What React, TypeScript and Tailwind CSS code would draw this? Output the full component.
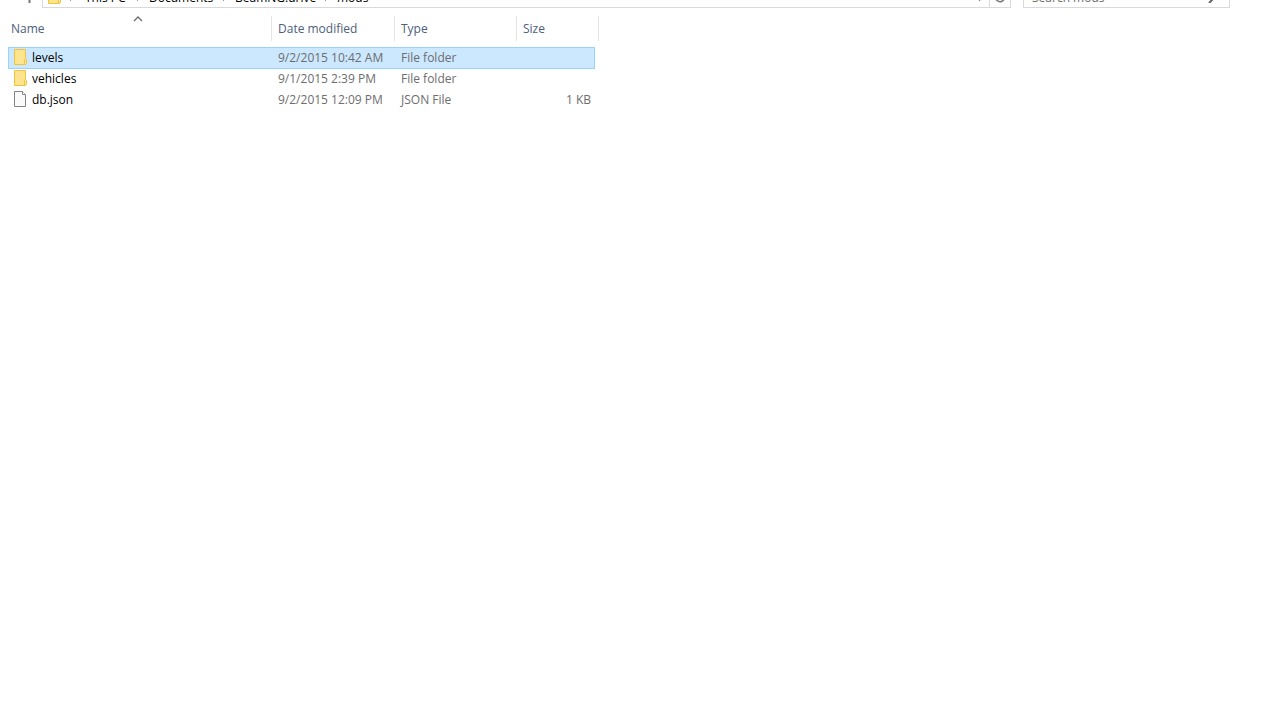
import React from "react";

type Entry = {
  name: string;
  modified: string;
  type: string;
  size: string;
  kind: "folder" | "file";
  selected?: boolean;
};

const entries: Entry[] = [
  { name: "levels", modified: "9/2/2015 10:42 AM", type: "File folder", size: "", kind: "folder", selected: true },
  { name: "vehicles", modified: "9/1/2015 2:39 PM", type: "File folder", size: "", kind: "folder" },
  { name: "db.json", modified: "9/2/2015 12:09 PM", type: "JSON File", size: "1 KB", kind: "file" },
];

const crumbs = [
  { label: "This PC", width: "w-[64px]" },
  { label: "Documents", width: "w-[86px]" },
  { label: "BeamNG.drive", width: "w-[102px]" },
  { label: "mods", width: "w-[40px]" },
];

function FolderIcon() {
  return (
    <svg width="14" height="16" viewBox="0 0 14 16" className="shrink-0" aria-hidden="true">
      <path d="M0.5 0.5H11.5V15.5H0.5Z" fill="#ffe48f" stroke="#f0c33c" />
      <path d="M10.5 15.5V10.5L11.5 9.5L12.5 10.5V14.5L11.5 15.5Z" fill="#ffe9a2" stroke="#f0c33c" />
    </svg>
  );
}

function FileIcon() {
  return (
    <svg width="14" height="16" viewBox="0 0 14 16" className="shrink-0" aria-hidden="true">
      <path d="M0.5 0.5H8.5L11.5 3.5V15.5H0.5Z" fill="#fafafa" stroke="#848484" />
      <path d="M8.5 0.5V3.5H11.5" fill="#ffffff" stroke="#848484" />
    </svg>
  );
}

function Chevron() {
  return (
    <svg width="5" height="8" viewBox="0 0 5 8" className="shrink-0" aria-hidden="true">
      <path d="M1 1L4 4L1 7" fill="none" stroke="#999999" />
    </svg>
  );
}

function NavigationBar() {
  return (
    <header className="flex h-2 items-end overflow-hidden pr-[50px]">
      <button type="button" aria-label="Up" className="flex h-6 w-[42px] shrink-0 items-center pl-6">
        <svg width="11" height="13" viewBox="0 0 11 13" aria-hidden="true">
          <path d="M5.5 13V1M1 5.5L5.5 1L10 5.5" fill="none" stroke="#777777" strokeWidth="2" />
        </svg>
      </button>
      <nav aria-label="Address" className="flex h-6 min-w-0 flex-1 items-center border border-[#d9d9d9] pl-[5px]">
        <FolderIcon />
        <span className="ml-[7px] flex w-4 items-center pt-1">
          <Chevron />
        </span>
        {crumbs.map((crumb, i) => (
          <span key={crumb.label} className={`flex shrink-0 items-center justify-between pr-3 pt-1 ${crumb.width}`}>
            <a href="#" className="whitespace-nowrap text-black">
              {crumb.label}
            </a>
            {i < crumbs.length - 1 && (
              <span className="-mr-1 flex">
                <Chevron />
              </span>
            )}
          </span>
        ))}
        <button type="button" aria-label="Previous locations" className="ml-auto flex h-full w-5 items-center justify-center">
          <svg width="9" height="14" viewBox="0 0 9 14" aria-hidden="true">
            <path d="M1 7L4.5 11L8 7" fill="none" stroke="#777777" strokeWidth="1.5" />
          </svg>
        </button>
        <button type="button" aria-label="Refresh" className="flex h-full w-[21px] items-center justify-center border-l border-[#d9d9d9]">
          <svg width="12" height="14" viewBox="0 0 12 14" aria-hidden="true">
            <path d="M10 6A4.5 4.5 0 1 0 10.5 9M10.5 1V5H7" fill="none" stroke="#777777" strokeWidth="1.5" />
          </svg>
        </button>
      </nav>
      <div className="ml-3 flex h-6 w-[207px] shrink-0 items-center border border-[#d9d9d9] pl-2 pr-[9px]">
        <input
          type="text"
          aria-label="Search mods"
          placeholder="Search mods"
          className="min-w-0 flex-1 bg-transparent pt-1 outline-none placeholder:text-[#6d6d6d]"
        />
        <svg width="12" height="14" viewBox="0 0 12 14" aria-hidden="true">
          <circle cx="7.5" cy="4.5" r="3.5" fill="none" stroke="#666666" strokeWidth="1.5" />
          <path d="M6 9L1 14" fill="none" stroke="#666666" strokeWidth="2" />
        </svg>
      </div>
    </header>
  );
}

function HeaderCell({ label, first, span }: { label: string; first?: boolean; span?: number }) {
  return (
    <th scope="col" colSpan={span} aria-sort={first ? "ascending" : undefined} className="p-0 pb-[6px] text-left font-normal">
      <button
        type="button"
        className={`relative flex h-[25px] w-full items-center border-r border-[#e5e5e5] text-[#4c607a] ${first ? "pl-[3px]" : "pl-[6px]"}`}
      >
        {label}
        {first && (
          <svg width="10" height="6" viewBox="0 0 10 6" className="absolute left-[125px] top-0" aria-hidden="true">
            <path d="M1 5L5 1L9 5" fill="none" stroke="#6d6d6d" strokeWidth="1.3" />
          </svg>
        )}
      </button>
    </th>
  );
}

function FileTable() {
  return (
    <table className="ml-2 mt-2 w-[591px] table-fixed border-separate border-spacing-0">
      <colgroup>
        <col className="w-[264px]" />
        <col className="w-[123px]" />
        <col className="w-[122px]" />
        <col className="w-[78px]" />
        <col className="w-[4px]" />
      </colgroup>
      <thead>
        <tr>
          <HeaderCell label="Name" first />
          <HeaderCell label="Date modified" />
          <HeaderCell label="Type" />
          <HeaderCell label="Size" span={2} />
        </tr>
      </thead>
      <tbody className="leading-[18px] text-[#6d6d6d]">
        {entries.map((entry) => {
          const cell = entry.selected
            ? "h-[22px] border-y border-[#99d1ff] bg-[#cce8ff]"
            : "h-[21px] border-transparent";
          return (
            <tr key={entry.name} aria-selected={!!entry.selected}>
              <td className={`border-l pb-0 pl-[5px] pr-0 pt-px align-top ${cell}`}>
                <div className="flex items-start gap-1 text-black">
                  {entry.kind === "folder" ? <FolderIcon /> : <FileIcon />}
                  <span>{entry.name}</span>
                </div>
              </td>
              <td className={`whitespace-nowrap pb-0 pl-[6px] pr-0 pt-px align-top ${cell}`}>{entry.modified}</td>
              <td className={`whitespace-nowrap pb-0 pl-[6px] pr-0 pt-px align-top ${cell}`}>{entry.type}</td>
              <td className={`whitespace-nowrap border-r pb-0 pl-0 pr-[3px] pt-px text-right align-top ${cell}`}>
                {entry.size}
              </td>
              <td className="p-0" />
            </tr>
          );
        })}
      </tbody>
    </table>
  );
}

export default function App() {
  return (
    <main className="min-h-screen bg-white font-['Open_Sans','Noto_Sans',sans-serif] text-[12px] leading-4">
      <NavigationBar />
      <FileTable />
    </main>
  );
}
